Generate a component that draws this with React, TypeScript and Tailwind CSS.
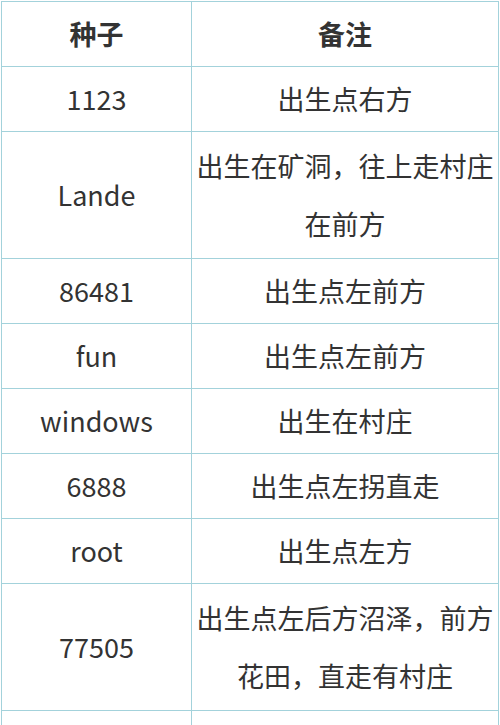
const rows: { seed: string; note: string; tall?: boolean }[] = [
  { seed: "1123", note: "出生点右方" },
  { seed: "Lande", note: "出生在矿洞，往上走村庄在前方", tall: true },
  { seed: "86481", note: "出生点左前方" },
  { seed: "fun", note: "出生点左前方" },
  { seed: "windows", note: "出生在村庄" },
  { seed: "6888", note: "出生点左拐直走" },
  { seed: "root", note: "出生点左方" },
  { seed: "77505", note: "出生点左后方沼泽，前方花田，直走有村庄", tall: true },
  { seed: "", note: "" },
];

export default function App() {
  return (
    <div className="min-h-screen bg-white pl-[1px] pt-[1px] font-['Noto_Sans_CJK_SC',sans-serif] text-[#333333]">
      <table className="border-collapse table-fixed w-[497px]">
        <colgroup>
          <col className="w-[190px]" />
          <col className="w-[307px]" />
        </colgroup>
        <thead>
          <tr className="h-[65px]">
            <th className="border border-[#a3d2db] text-[27px] font-bold text-center align-middle">种子</th>
            <th className="border border-[#a3d2db] text-[27px] font-bold text-center align-middle">备注</th>
          </tr>
        </thead>
        <tbody>
          {rows.map((r, i) => (
            <tr key={i} className={r.tall ? "h-[127px]" : "h-[65px]"}>
              <td className="border border-[#a3d2db] text-[27px] text-center align-middle">{r.seed}</td>
              <td className="border border-[#a3d2db] px-[3px] text-[27px] leading-[58px] text-center align-middle">
                {r.note}
              </td>
            </tr>
          ))}
        </tbody>
      </table>
    </div>
  );
}
